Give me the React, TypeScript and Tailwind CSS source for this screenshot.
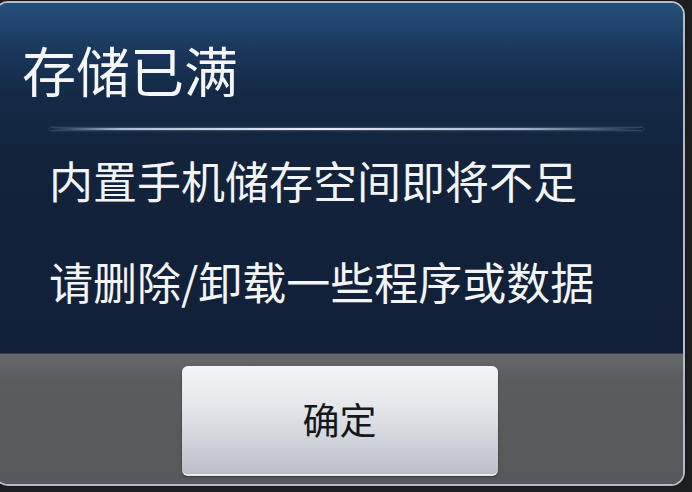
import React from 'react';

const cjk = { fontFamily: '"Noto Sans CJK SC", "Noto Sans", sans-serif' };

const StorageFullDialog: React.FC = () => {
  return (
    <div className="-ml-[6px] mt-[1px] w-[691px] h-[485px] rounded-[14px] border-2 border-[#b4bcc8] overflow-hidden flex flex-col shadow-[0_0_2px_rgba(0,0,0,0.6)]">
      {/* Message area */}
      <div className="flex-1 flex flex-col bg-[linear-gradient(to_bottom,#24507d_0%,#1a365a_14%,#142a47_26%,#12233b_45%,#112037_100%)]">
        <h1 className="pl-[26px] pt-[40px] text-[54px] leading-none text-[#f4f6f8] font-normal" style={cjk}>
          存储已满
        </h1>
        <div className="mt-[31px] ml-[54px] mr-[40px] h-[2px] bg-[linear-gradient(to_right,rgba(190,210,230,0)_0%,rgba(200,218,236,0.85)_12%,#e6eef6_45%,rgba(200,218,236,0.8)_80%,rgba(190,210,230,0)_100%)] shadow-[0_0_3px_rgba(170,200,230,0.6)]" />
        <div className="pl-[53px] pt-[28px] flex flex-col gap-[57px] text-[44px] leading-[44px] text-[#f2f4f6]" style={cjk}>
          <p>内置手机储存空间即将不足</p>
          <p>请删除/卸载一些程序或数据</p>
        </div>
      </div>

      {/* Button bar */}
      <div className="h-[131px] shrink-0 flex justify-center pt-[12px] bg-[linear-gradient(to_bottom,#66686c,#5a5c60_20%,#56585c)] border-t border-[#3c3f44]">
        <button className="w-[316px] h-[110px] rounded-[6px] flex items-center justify-center text-[37px] text-[#15171a] bg-[linear-gradient(to_bottom,#f3f4f6_0%,#e3e5ea_40%,#c6c9d0_85%,#b9bcc4_100%)] border-b-2 border-[#e9ebef] shadow-[0_1px_2px_rgba(0,0,0,0.45)]" style={cjk}>
          确定
        </button>
      </div>
    </div>
  );
};

export default function App() {
  return (
    <div className="w-[692px] h-[492px] overflow-hidden bg-[#1d1e20]">
      <StorageFullDialog />
    </div>
  );
}
